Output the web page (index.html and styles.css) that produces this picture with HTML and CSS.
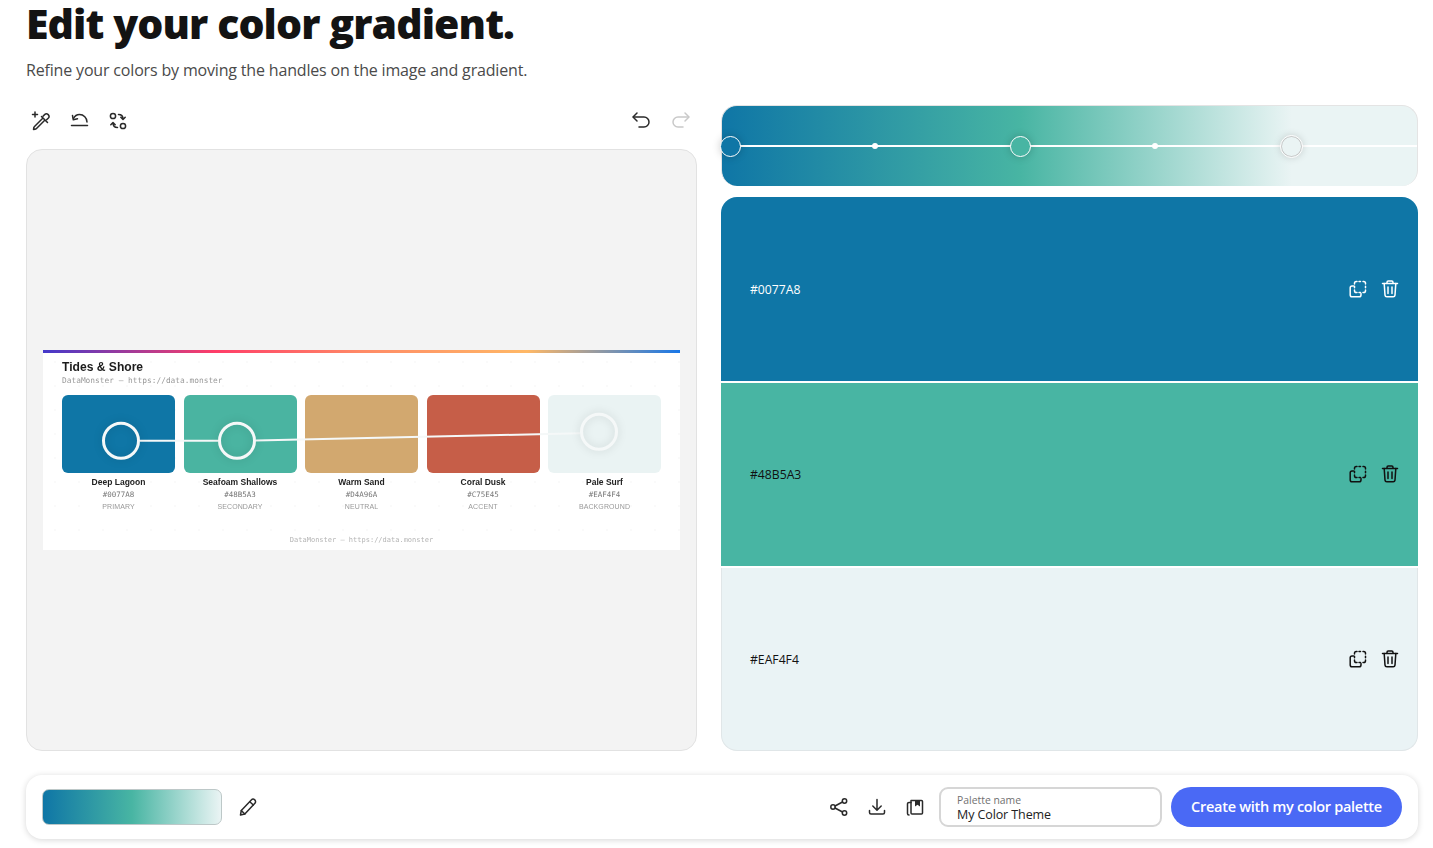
FILE: index.html
```html
<!DOCTYPE html>
<html lang="en">
<head>
<meta charset="utf-8">
<title>Edit your color gradient</title>
<link rel="stylesheet" href="styles.css">
</head>
<body>
<div class="page">
  <header class="head">
    <h1>Edit your color gradient.</h1>
    <p>Refine your colors by moving the handles on the image and gradient.</p>
  </header>
  <main class="main">
    <section class="left">
      <div class="toolbar">
        <div class="tools">
          <svg class="ic" viewBox="0 0 20 20"><path d="M1.500 3.500h5M4 1v5"/><path d="M10.500 5.500l6 6"/><path d="M12 5.200l1.600-1.600a2.500 2.500 0 0 1 3.600 3.600l-1.600 1.600"/><path d="M11.500 7.500l-8 8c-.5.500-.7 1-.7 1.500l-.3 1.500 1.500-.3c.5 0 1-.2 1.500-.7l8-8"/></svg>
          <svg class="ic" viewBox="0 0 20 20"><path d="M1.500 14.500h16"/><path d="M17 11a7.500 7.500 0 0 0-7.500-7.500c-2.800 0-4.800 1.500-6 4"/><path d="M2.500 4.500l.8 4.300 4.200-1"/></svg>
          <svg class="ic" viewBox="0 0 20 20"><circle cx="5" cy="5" r="2.600"/><circle cx="15" cy="15" r="2.600"/><path d="M10.500 3.500c2.500 0 4.500 1 4.500 4.500M12.800 6.300L15 8.500l2.200-2.200"/><path d="M9.500 16.500C7 16.500 5 15.500 5 12M2.800 13.700L5 11.500l2.200 2.200"/></svg>
        </div>
        <div class="tools tools-wide">
          <svg class="ic" viewBox="0 0 20 20"><path d="M6 2L2 6l4 4"/><path d="M2.500 6h10.500a5 5 0 0 1 0 10H8"/></svg>
          <svg class="ic muted" viewBox="0 0 20 20"><path d="M14 2l4 4-4 4"/><path d="M17.500 6H7a5 5 0 0 0 0 10h5"/></svg>
        </div>
      </div>
      <div class="stage">
        <div class="shot">
          <div class="shot-rule"></div>
          <div class="shot-body">
            <div class="shot-title">Tides &amp; Shore</div>
            <div class="shot-sub">DataMonster — https://data.monster</div>
            <div class="cards">
              <div class="card"><div class="chip c1"></div><b>Deep Lagoon</b><code>#0077A8</code><small>PRIMARY</small></div>
              <div class="card"><div class="chip c2"></div><b>Seafoam Shallows</b><code>#48B5A3</code><small>SECONDARY</small></div>
              <div class="card"><div class="chip c3"></div><b>Warm Sand</b><code>#D4A96A</code><small>NEUTRAL</small></div>
              <div class="card"><div class="chip c4"></div><b>Coral Dusk</b><code>#C75E45</code><small>ACCENT</small></div>
              <div class="card"><div class="chip c5"></div><b>Pale Surf</b><code>#EAF4F4</code><small>BACKGROUND</small></div>
            </div>
            <div class="shot-foot">DataMonster — https://data.monster</div>
          </div>
          <svg class="overlay" viewBox="0 0 637 200">
            <path class="link" d="M97 90.700H175M213 90.500L537 83.300"/>
            <circle class="halo" cx="78" cy="90.700" r="17.500"/>
            <circle class="halo" cx="194" cy="90.700" r="17.500"/>
            <circle class="halo" cx="556" cy="81.800" r="17.500"/>
          </svg>
        </div>
      </div>
    </section>
    <section class="right">
      <div class="gradient">
        <div class="track"></div>
        <span class="knob k1"></span>
        <span class="dot d1"></span>
        <span class="knob k2"></span>
        <span class="dot d2"></span>
        <span class="knob k3"></span>
      </div>
      <div class="stack">
        <div class="band b1">
          <span>#0077A8</span>
          <div class="band-ic">
            <svg class="ic" viewBox="0 0 20 20"><use href="#dup"/></svg>
            <svg class="ic" viewBox="0 0 20 20"><use href="#bin"/></svg>
          </div>
        </div>
        <div class="band b2">
          <span>#48B5A3</span>
          <div class="band-ic">
            <svg class="ic" viewBox="0 0 20 20"><use href="#dup"/></svg>
            <svg class="ic" viewBox="0 0 20 20"><use href="#bin"/></svg>
          </div>
        </div>
        <div class="band b3">
          <span>#EAF4F4</span>
          <div class="band-ic">
            <svg class="ic" viewBox="0 0 20 20"><use href="#dup"/></svg>
            <svg class="ic" viewBox="0 0 20 20"><use href="#bin"/></svg>
          </div>
        </div>
      </div>
    </section>
  </main>
  <footer class="bar">
    <div class="bar-l">
      <div class="mini"></div>
      <svg class="ic" viewBox="0 0 20 20"><path d="M2.500 18l.8-4.500L13.300 3a2.400 2.400 0 0 1 3.600 3.300L6.800 17z"/><path d="M3.300 13.500L6.800 17M11.800 4.700l3.500 3.300"/></svg>
    </div>
    <div class="bar-r">
      <svg class="ic" viewBox="0 0 20 20"><circle cx="15.500" cy="4" r="2.200"/><circle cx="15.500" cy="16" r="2.200"/><circle cx="4" cy="10" r="2.200"/><path d="M6 9l7.500-4M6 11l7.500 4"/></svg>
      <svg class="ic" viewBox="0 0 20 20"><path d="M10 2.500v10.500M5.800 9l4.200 4.200L14.200 9"/><path d="M2.500 13.500v2c0 1 .6 1.500 1.500 1.500h12c.9 0 1.500-.5 1.500-1.500v-2"/></svg>
      <svg class="ic" viewBox="0 0 20 20"><path d="M6 3.500h10.500c.6 0 1 .4 1 1V16c0 .6-.4 1-1 1H7c-.6 0-1-.4-1-1z"/><path d="M6 5.500H4c-.8 0-1.500.6-1.500 1.500v9.500c0 1 .7 1.500 1.500 1.500"/><path class="fill" d="M10 3.500h5v6l-2.500-1.800L10 9.500z"/></svg>
      <label class="name">
        <span>Palette name</span>
        <strong>My Color Theme</strong>
      </label>
      <button class="cta" type="button">Create with my color palette</button>
    </div>
  </footer>
</div>
<svg class="defs" aria-hidden="true">
  <symbol id="dup" viewBox="0 0 20 20">
    <path d="M5.500 7H4c-1 0-1.800.8-1.800 1.800V16c0 1 .8 1.800 1.800 1.800h7.200c1 0 1.800-.8 1.800-1.800v-1.500"/>
    <path d="M6.500 5V4.300c0-1 .8-1.800 1.800-1.800H9M11 2.500h1.500M15 2.500h.7c1 0 1.800.8 1.800 1.800V5M17.500 7.200v1.600M17.500 11v.7c0 1-.8 1.800-1.800 1.800H15M12.500 13.500H11M9 13.500h-.7c-1 0-1.800-.8-1.800-1.800V11M6.500 8.800V7.200"/>
  </symbol>
  <symbol id="bin" viewBox="0 0 20 20">
    <path d="M2.500 4.500h15M7 4.500V3.200c0-.7.500-1.200 1.200-1.200h3.600c.7 0 1.200.5 1.200 1.200v1.300"/>
    <path d="M4.200 4.500l.8 11.600c.1 1 .8 1.700 1.800 1.700h6.400c1 0 1.700-.7 1.800-1.700l.8-11.600"/>
    <path d="M8 8v6.500M12 8v6.500"/>
  </symbol>
</svg>
</body>
</html>
```
FILE: styles.css
```css
* { box-sizing: border-box; }
html, body { margin: 0; height: 100%; overflow: hidden; background: #fff; }
body { font-family: "Open Sans", "Noto Sans", sans-serif; color: #1b1b1b; }
.defs { display: none; }
.page { width: 1433px; height: 848px; padding: 0 15px 0 26px; display: flex; flex-direction: column; }

.head { height: 105px; flex: none; }
h1 { margin: 0; font-size: 41px; line-height: 46px; font-weight: 800; letter-spacing: -0.9px; color: #131313; }
.head p { margin: 9px 0 0; font-size: 16px; line-height: 30px; letter-spacing: -0.17px; color: #4a4a4a; }

.main { display: grid; grid-template-columns: 671px 697px; column-gap: 24px; height: 646px; flex: none; }
.left { display: flex; flex-direction: column; min-width: 0; }
.toolbar { height: 44px; display: flex; justify-content: space-between; align-items: flex-start; padding: 6px 6px 0 5px; }
.tools { display: flex; gap: 18.500px; }
.tools-wide { gap: 20px; }
.ic { width: 20px; height: 20px; fill: none; stroke: #2a2a2a; stroke-width: 1.500; stroke-linecap: round; stroke-linejoin: round; display: block; flex: none; }
.ic.muted { stroke: #c9c9c9; }
.ic .fill { fill: #2a2a2a; stroke: none; }

.stage { flex: 1; background: #f3f3f3; border: 1px solid #e2e2e2; border-radius: 16px; display: flex; align-items: center; justify-content: center; }
.shot { position: relative; width: 637px; height: 200px; background: #fff radial-gradient(circle, #fafafa 1px, transparent 1.200px) 0 0 / 24px 24px; display: flex; flex-direction: column; font-family: "Liberation Sans", Arial, sans-serif; filter: blur(0.35px); }
.shot-rule { height: 3px; flex: none; background: linear-gradient(90deg, #4338ca, #ff3d68 27%, #ff8a66 50%, #ffb866 76%, #1877e8); }
.shot-body { padding: 7px 19px 0; flex: 1; display: flex; flex-direction: column; }
.shot-title { font-size: 12.100px; line-height: 14px; font-weight: 700; color: #1c1c1c; }
.shot-sub { font: 7.850px/10px "DejaVu Sans Mono", monospace; color: #9a9a9a; margin-top: 2px; }
.cards { display: grid; grid-template-columns: repeat(5, 113px); column-gap: 8.500px; margin-top: 9px; }
.card { display: flex; flex-direction: column; align-items: center; text-align: center; }
.chip { width: 100%; height: 78px; border-radius: 6px; margin-bottom: 4px; }
.c1 { background: #0f76a6; }
.c2 { background: #4ab4a1; }
.c3 { background: #d2a86f; }
.c4 { background: #c65e48; }
.c5 { background: #eaf3f3; }
.card b { font-size: 8.500px; line-height: 11px; color: #222; }
.card code { font: 7.500px/12px "DejaVu Sans Mono", monospace; color: #777; margin-top: 1px; }
.card small { font-size: 7px; line-height: 10px; color: #999; letter-spacing: 0.100px; margin-top: 1px; }
.shot-foot { font: 7px/10px "DejaVu Sans Mono", monospace; color: #b5b5b5; text-align: center; margin-top: 23px; }
.overlay { position: absolute; inset: 0; width: 100%; height: 100%; }
.link { fill: none; stroke: #f5f8f8; stroke-width: 2; }
.halo { fill: none; stroke: #f5f8f8; stroke-width: 3; filter: drop-shadow(0 0 4px rgba(0,0,0,.14)); }

.right { display: flex; flex-direction: column; gap: 11px; min-width: 0; }
.gradient { position: relative; height: 81px; flex: none; border-radius: 16px; border: 1px solid #e4e4e4; border-bottom: 0; background: linear-gradient(90deg, #0f76a6 0%, #48b5a3 43%, #eaf4f4 82%); }
.track { position: absolute; left: 9px; right: 0; top: 39px; height: 2px; background: #fff; }
.knob { position: absolute; top: 29.500px; width: 21px; height: 21px; margin-left: -10.500px; border-radius: 50%; border: 1.500px solid #fff; box-shadow: 0 0 8px rgba(0,0,0,.2); }
.k1 { left: 8px; background: #0f76a6; }
.k2 { left: 298px; background: #48b5a3; }
.k3 { left: 569px; background: #eaf4f4; border-color: #c4c4c4; outline: 1px solid #fff; }
.dot { position: absolute; top: 37px; width: 6px; height: 6px; margin-left: -3px; border-radius: 50%; background: #fff; }
.d1 { left: 153px; }
.d2 { left: 433px; }
.stack { flex: 1; display: flex; flex-direction: column; gap: 2px; }
.band { flex: 1; display: flex; align-items: center; justify-content: space-between; padding: 0 18px 0 29px; font-size: 12.200px; }
.band span { padding-top: 1px; }
.b1 { flex: none; height: 184px; background: #0f76a6; color: #fff; border-radius: 16px 16px 0 0; }
.b2 { background: #48b5a3; color: #111; }
.b3 { background: #eaf3f5; color: #111; border-radius: 0 0 16px 16px; border: 1px solid #e0e6e8; border-top: 0; padding: 0 17px 0 28px; }
.band-ic { display: flex; gap: 12px; }
.b1 .ic { stroke: #fff; }
.b2 .ic, .b3 .ic { stroke: #111; }

.bar { margin-top: 24px; height: 64px; flex: none; background: #fff; border-radius: 16px; box-shadow: 0 1px 6px rgba(0,0,0,.16); display: flex; align-items: center; justify-content: space-between; padding: 0 16px; }
.bar-l, .bar-r { display: flex; align-items: center; }
.bar-l { gap: 16px; }
.bar-r { gap: 18px; }
.mini { width: 180px; height: 36px; border-radius: 7px; border: 1px solid #bdc8c8; background: linear-gradient(90deg, #0f76a6 0%, #48b5a3 50%, #eaf4f4 100%); }
.name { width: 223px; height: 40px; margin-left: -4px; border: 2px solid #d6d6d6; border-radius: 9px; padding: 5px 16px 0; display: flex; flex-direction: column; }
.name span { font-size: 10.400px; line-height: 13px; color: #707070; }
.name strong { font-size: 12.500px; line-height: 15px; font-weight: 400; color: #222; letter-spacing: -0.100px; }
.cta { width: 231px; height: 40px; margin-left: -9px; padding: 0 0 2px; border: 0; border-radius: 20px; background: #4a69f5; color: #fff; font: 600 14.500px "Open Sans", sans-serif; letter-spacing: -0.280px; }
```
